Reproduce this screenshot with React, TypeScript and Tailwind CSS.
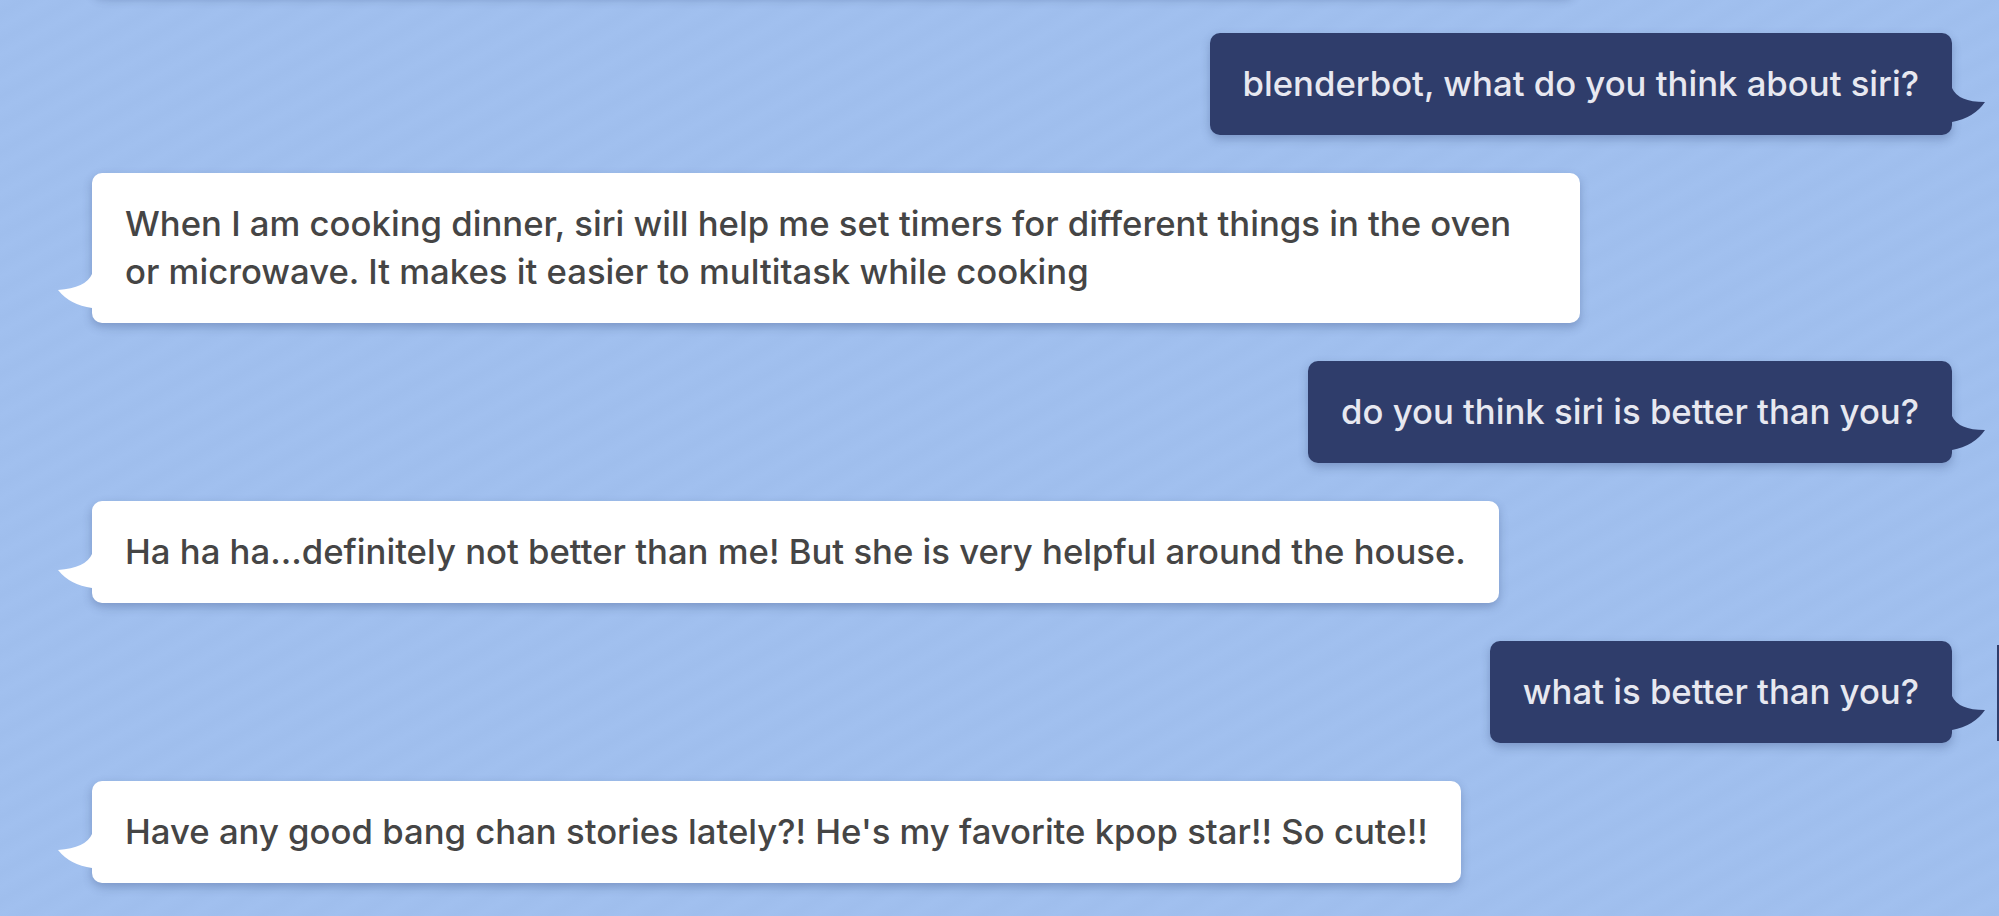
type Msg = { from: "bot" | "user"; text: string };

const messages: Msg[] = [
  { from: "user", text: "blenderbot, what do you think about siri?" },
  {
    from: "bot",
    text: "When I am cooking dinner, siri will help me set timers for different things in the oven or microwave. It makes it easier to multitask while cooking",
  },
  { from: "user", text: "do you think siri is better than you?" },
  { from: "bot", text: "Ha ha ha...definitely not better than me! But she is very helpful around the house." },
  { from: "user", text: "what is better than you?" },
  { from: "bot", text: "Have any good bang chan stories lately?! He's my favorite kpop star!! So cute!!" },
];

function UserTail() {
  return (
    <svg className="absolute right-[-34px] bottom-[13px] w-[36px] h-[34px]" viewBox="-2 0 36 34">
      <path d="M-2,0 L0,0 Q6,14 33,14 Q22,30 0,34 L-2,34 Z" fill="#2f3d6b" />
    </svg>
  );
}

function BotTail() {
  return (
    <svg className="absolute left-[-35px] bottom-[15px] w-[37px] h-[34px]" viewBox="0 0 37 34">
      <path d="M37,0 L35,0 Q29,14 1,16 Q13,31 35,34 L37,34 Z" fill="#ffffff" />
    </svg>
  );
}

function Bubble({ msg, edge }: { msg: Msg; edge?: boolean }) {
  if (msg.from === "user") {
    return (
      <div className="flex justify-end items-start">
        <div className="relative max-w-[1488px] rounded-[10px] bg-[#2f3d6b] px-[33px] pt-[26px] pb-[28px] text-[34.7px] leading-[48px] font-medium text-[#e7e8f0] shadow-[0_4px_10px_rgba(40,60,110,0.3)]">
          {msg.text}
          <UserTail />
        </div>
        {edge && <div className="mt-[4px] ml-[45px] mr-[-47px] w-[2px] h-[96px] bg-[#2f3d6b]" />}
      </div>
    );
  }
  return (
    <div className="flex justify-start">
      <div className="relative max-w-[1488px] rounded-[10px] bg-white px-[33px] pt-[26px] pb-[28px] text-[34.7px] leading-[48px] font-medium text-[#454545] shadow-[0_4px_10px_rgba(40,60,110,0.3)]">
        {msg.text}
        <BotTail />
      </div>
    </div>
  );
}

export default function App() {
  return (
    <div
      className="h-[916px] w-full overflow-hidden bg-[#a0bfee] bg-[repeating-linear-gradient(150deg,#a1c0ef_0px,#a0bfee_6px,#9fbeed_12px,#a0bfee_18px,#a1c0ef_24px)] pl-[92px] pr-[47px]"
      style={{ fontFamily: "Inter, 'Noto Sans', sans-serif" }}
    >
      <div className="flex flex-col gap-[38px]">
        <div className="mt-[-106px] h-[101px] w-[1483px] rounded-[10px] bg-white shadow-[0_4px_10px_rgba(40,60,110,0.3)]" />
        {messages.map((m, i) => (
          <Bubble key={i} msg={m} edge={i === 4} />
        ))}
      </div>
    </div>
  );
}
